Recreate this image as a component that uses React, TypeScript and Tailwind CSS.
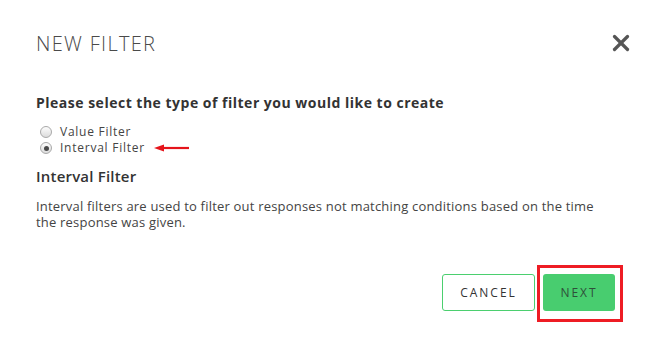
import { X } from "lucide-react";

function Radio({ checked, label }: { checked?: boolean; label: string }) {
  return (
    <label className="flex items-center h-[16px]">
      <span className="ml-[4px] w-[12px] h-[12px] rounded-full border border-[#a9a9a9] bg-gradient-to-b from-[#fdfdfd] to-[#dcdcdc] flex items-center justify-center">
        {checked && <span className="w-[5px] h-[5px] rounded-full bg-[#4a4a4a]" />}
      </span>
      <span className="ml-[8px] text-[12px] leading-[16px] tracking-[0.75px] text-[#444]">{label}</span>
    </label>
  );
}

function RedArrow() {
  return (
    <svg width="36" height="10" viewBox="0 0 36 10" className="ml-[9px]">
      <line x1="8" y1="5" x2="35" y2="5" stroke="#e5141b" strokeWidth="2.2" />
      <polygon points="0,5 10,1.5 10,8.5" fill="#e5141b" />
    </svg>
  );
}

export default function App() {
  return (
    <div
      className="w-[649px] h-[349px] bg-white px-[36px] pt-[32px]"
      style={{ fontFamily: '"Open Sans", "Noto Sans", sans-serif' }}
    >
      <div className="flex items-center justify-between -mr-[21px]">
        <h2 className="text-[20px] leading-[24px] font-light tracking-[1.3px] text-[#4a4a4a]">NEW FILTER</h2>
        <X size={26} strokeWidth={3} className="text-[#555] -mt-[2px]" />
      </div>

      <p className="mt-[37px] text-[14px] leading-[20px] font-bold text-[#333] tracking-[0.5px]">
        Please select the type of filter you would like to create
      </p>

      <div className="mt-[11px] flex flex-col">
        <Radio label="Value Filter" />
        <div className="flex items-center">
          <Radio checked label="Interval Filter" />
          <RedArrow />
        </div>
      </div>

      <h3 className="mt-[10px] text-[15px] leading-[20px] font-semibold text-[#333] tracking-[0.2px]">Interval Filter</h3>

      <p className="mt-[12px] text-[13px] leading-[16px] text-[#444] tracking-[0.2px] w-[570px]">
        Interval filters are used to filter out responses not matching conditions based on the time the response was given.
      </p>

      <div className="mt-[35px] flex justify-end items-start -mr-[10px]">
        <button className="mt-[9px] w-[93px] h-[37px] rounded-[3px] border border-[#4bcf6f] bg-white text-[12px] tracking-[2px] text-[#333]">
          CANCEL
        </button>
        <div className="ml-[2px] border-[3px] border-[#ee1c24] pt-[6px] pb-[8px] pl-[3px] pr-[5px]">
          <button className="w-[72px] h-[37px] rounded-[3px] bg-[#48cd6f] text-[12px] tracking-[2px] text-[#2f4f3a]">
            NEXT
          </button>
        </div>
      </div>
    </div>
  );
}
